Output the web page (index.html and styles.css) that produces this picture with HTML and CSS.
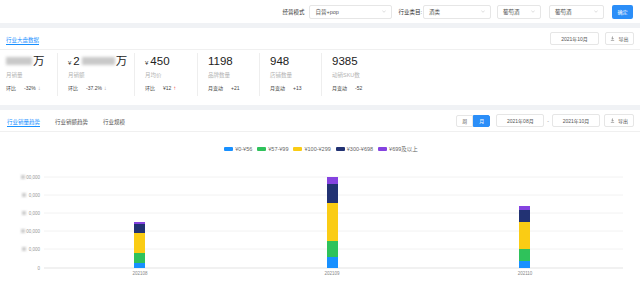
FILE: index.html
```html
<!DOCTYPE html>
<html lang="zh-CN">
<head>
    <meta charset="UTF-8">
    <meta name="viewport" content="width=device-width, initial-scale=1.0">
    <title>行业大盘数据</title>
    <link rel="stylesheet" href="styles.css">
</head>
<body>
    <!-- 筛选条 -->
    <div class="topbar">
        <span class="field-label">经营模式</span>
        <div class="select w-mode"><span>自营+pop</span><svg class="chev" viewBox="0 0 6 4"><polyline points="0.5,0.5 3,3.2 5.5,0.5"/></svg></div>
        <span class="field-label cat-label">行业类目:</span>
        <div class="select w-cat1"><span>酒类</span><svg class="chev" viewBox="0 0 6 4"><polyline points="0.5,0.5 3,3.2 5.5,0.5"/></svg></div>
        <div class="select w-cat2"><span>葡萄酒</span><svg class="chev" viewBox="0 0 6 4"><polyline points="0.5,0.5 3,3.2 5.5,0.5"/></svg></div>
        <div class="select w-cat3"><span>葡萄酒</span><svg class="chev" viewBox="0 0 6 4"><polyline points="0.5,0.5 3,3.2 5.5,0.5"/></svg></div>
        <button class="btn-primary">确定</button>
    </div>

    <!-- 行业大盘数据 -->
    <div class="card">
        <div class="card-head">
            <div class="tabs">
                <span class="tab active">行业大盘数据</span>
            </div>
            <div class="tools">
                <div class="date-box w-date">2021年10月</div>
                <button class="btn-export">
                    <svg class="dl" viewBox="0 0 6 6"><path d="M3 0.5v3.2M1.6 2.4L3 3.8 4.4 2.4M1 5.3h4"/></svg>导出
                </button>
            </div>
        </div>
        <div class="stats">
            <div class="stat">
                <div class="value"><span class="masked m-1"></span>万</div>
                <div class="label">月销量</div>
                <div class="change"><span class="kind">环比</span><span class="num">-32%</span><span class="arrow down">↓</span></div>
            </div>
            <div class="stat">
                <div class="value"><span class="yen">¥</span>2<span class="masked m-2"></span>万</div>
                <div class="label">月销额</div>
                <div class="change"><span class="kind">环比</span><span class="num">-37.2%</span><span class="arrow down">↓</span></div>
            </div>
            <div class="stat">
                <div class="value"><span class="yen">¥</span>450</div>
                <div class="label">月均价</div>
                <div class="change"><span class="kind">环比</span><span class="num">¥12</span><span class="arrow up">↑</span></div>
            </div>
            <div class="stat">
                <div class="value">1198</div>
                <div class="label">品牌数量</div>
                <div class="change"><span class="kind">月变动</span><span class="num">+21</span></div>
            </div>
            <div class="stat">
                <div class="value">948</div>
                <div class="label">店铺数量</div>
                <div class="change"><span class="kind">月变动</span><span class="num">+13</span></div>
            </div>
            <div class="stat">
                <div class="value">9385</div>
                <div class="label">动销SKU数</div>
                <div class="change"><span class="kind">月变动</span><span class="num">-52</span></div>
            </div>
        </div>
    </div>

    <!-- 趋势图 -->
    <div class="card chart-card">
        <div class="card-head head-2">
            <div class="tabs">
                <span class="tab active">行业销量趋势</span>
                <span class="tab">行业销额趋势</span>
                <span class="tab">行业规模</span>
            </div>
            <div class="tools">
                <div class="toggle">
                    <span class="opt">周</span>
                    <span class="opt on">月</span>
                </div>
                <div class="date-box w-range">2021年08月</div>
                <span class="dash">-</span>
                <div class="date-box w-range">2021年10月</div>
                <button class="btn-export">
                    <svg class="dl" viewBox="0 0 6 6"><path d="M3 0.5v3.2M1.6 2.4L3 3.8 4.4 2.4M1 5.3h4"/></svg>导出
                </button>
            </div>
        </div>

        <div class="legend">
            <span class="item"><i class="sw c1"></i>¥0-¥56</span>
            <span class="item"><i class="sw c2"></i>¥57-¥99</span>
            <span class="item"><i class="sw c3"></i>¥100-¥299</span>
            <span class="item"><i class="sw c4"></i>¥300-¥698</span>
            <span class="item"><i class="sw c5"></i>¥699及以上</span>
        </div>

        <svg class="chart" viewBox="0 0 640 124" width="640" height="124">
            <defs>
                <filter id="fuzz" x="-50%" y="-50%" width="200%" height="200%">
                    <feGaussianBlur stdDeviation="1"/>
                </filter>
            </defs>
            <g class="grid">
                <line x1="44" y1="17" x2="623" y2="17"/>
                <line x1="44" y1="35" x2="623" y2="35"/>
                <line x1="44" y1="53" x2="623" y2="53"/>
                <line x1="44" y1="71" x2="623" y2="71"/>
                <line x1="44" y1="89" x2="623" y2="89"/>
            </g>
            <line class="base" x1="44" y1="108" x2="623" y2="108"/>

            <g class="blur" filter="url(#fuzz)">
                <rect x="21" y="15" width="4" height="4"/>
                <rect x="22" y="33" width="4" height="4"/>
                <rect x="22" y="51" width="4" height="4"/>
                <rect x="21" y="69" width="4" height="4"/>
                <rect x="22" y="87" width="4" height="4"/>
            </g>
            <g class="ylab">
                <text x="40" y="19">00,000</text>
                <text x="40" y="37">0,000</text>
                <text x="40" y="55">0,000</text>
                <text x="40" y="73">00,000</text>
                <text x="40" y="91">0,000</text>
                <text x="40" y="110">0</text>
            </g>

            <!-- 202108 -->
            <rect class="c5" x="134" y="62" width="11" height="2"/>
            <rect class="c4" x="134" y="64" width="11" height="9"/>
            <rect class="c3" x="134" y="73" width="11" height="20"/>
            <rect class="c2" x="134" y="93" width="11" height="10"/>
            <rect class="c1" x="134" y="103" width="11" height="5"/>
            <!-- 202109 -->
            <rect class="c5" x="327" y="17" width="11" height="7"/>
            <rect class="c4" x="327" y="24" width="11" height="19"/>
            <rect class="c3" x="327" y="43" width="11" height="38"/>
            <rect class="c2" x="327" y="81" width="11" height="16"/>
            <rect class="c1" x="327" y="97" width="11" height="11"/>
            <!-- 202110 -->
            <rect class="c5" x="519" y="46" width="11" height="4"/>
            <rect class="c4" x="519" y="50" width="11" height="12"/>
            <rect class="c3" x="519" y="62" width="11" height="27"/>
            <rect class="c2" x="519" y="89" width="11" height="12"/>
            <rect class="c1" x="519" y="101" width="11" height="7"/>

            <g class="xlab">
                <text x="140" y="115">202108</text>
                <text x="332" y="115">202109</text>
                <text x="525" y="115">202110</text>
            </g>
        </svg>
    </div>
</body>
</html>
```

FILE: styles.css
```css
body {
    margin: 0;
    width: 640px;
    height: 284px;
    overflow: hidden;
    background-color: #f0f2f5;
    font-family: "Liberation Sans", "Noto Sans CJK SC", sans-serif;
    color: #333;
}
button {
    font-family: inherit;
    cursor: pointer;
}

/* 筛选条 */
.topbar {
    height: 23px;
    background-color: #fff;
    display: flex;
    align-items: center;
    justify-content: flex-end;
    padding-right: 7px;
}
.field-label {
    font-size: 5.5px;
    color: #333;
}
.cat-label {
    margin-left: 6px;
}
.select {
    box-sizing: border-box;
    height: 14px;
    border: 1px solid #e6e6e6;
    border-radius: 2px;
    display: flex;
    align-items: center;
    justify-content: space-between;
    padding: 0 5px 0 5px;
    font-size: 5.5px;
    color: #555;
}
.chev {
    width: 4px;
    height: 3px;
}
.chev polyline {
    fill: none;
    stroke: #c0c0c0;
    stroke-width: 0.8;
}
.w-mode { width: 83px; margin-left: 5px; }
.w-cat1 { width: 68px; margin-left: 1px; }
.w-cat2 { width: 44px; margin-left: 6px; }
.w-cat3 { width: 55px; margin-left: 8px; }
.btn-primary {
    width: 21px;
    height: 14px;
    margin-left: 8px;
    padding: 0;
    border: none;
    border-radius: 2px;
    background-color: #2b8ef8;
    color: #fff;
    font-size: 5px;
}

/* 卡片 */
.card {
    margin-top: 5px;
    background-color: #fff;
}
.card-head {
    box-sizing: border-box;
    height: 22px;
    padding: 0 6px 4px 6px;
    border-bottom: 1px solid #f0f0f0;
    display: flex;
    align-items: flex-end;
    justify-content: space-between;
}
.tabs {
    display: flex;
    gap: 15px;
}
.tab {
    box-sizing: border-box;
    height: 9px;
    font-size: 5.5px;
    line-height: 8px;
    color: #555;
    border-bottom: 1px solid transparent;
}
.tab.active {
    color: #1890ff;
    border-bottom-color: #1890ff;
}
.tools {
    display: flex;
    align-items: center;
}
.date-box {
    box-sizing: border-box;
    height: 13px;
    border: 1px solid #e6e6e6;
    border-radius: 2px;
    font-size: 5px;
    color: #555;
    display: flex;
    align-items: center;
    justify-content: center;
}
.w-date { width: 49px; }
.btn-export {
    box-sizing: border-box;
    width: 29px;
    height: 13px;
    margin-left: 6px;
    padding: 0;
    border: 1px solid #e6e6e6;
    border-radius: 2px;
    background-color: #fff;
    color: #555;
    font-size: 5px;
    display: flex;
    align-items: center;
    justify-content: center;
    gap: 3px;
}
.dl {
    width: 5px;
    height: 5px;
}
.dl path {
    fill: none;
    stroke: #777;
    stroke-width: 0.7;
}

/* 指标 */
.stats {
    display: grid;
    grid-template-columns: 57px 77px 63px 62px 62px 1fr;
    height: 43px;
    padding: 3px 0 9px 0;
}
.stat {
    padding: 1px 0 0 10px;
    border-left: 1px solid #eeeeee;
}
.stat:first-child {
    padding-left: 6px;
    border-left: none;
}
.value {
    height: 14px;
    font-size: 11.5px;
    line-height: 14px;
    color: #222;
    display: flex;
    align-items: center;
}
.yen {
    font-size: 6px;
    margin-right: 2px;
    margin-top: 3px;
}
.masked {
    display: inline-block;
    height: 8px;
    background-color: #c9c9c9;
    filter: blur(1.5px);
}
.m-1 { width: 26px; margin-right: 1px; }
.m-2 { width: 33px; margin-left: 2px; margin-right: 1px; }
.label {
    height: 8px;
    margin-top: 3px;
    font-size: 5.5px;
    line-height: 8px;
    color: #b3b3b3;
}
.change {
    height: 8px;
    margin-top: 5px;
    font-size: 5px;
    line-height: 8px;
    color: #444;
    display: flex;
}
.kind {
    margin-right: 8px;
}
.arrow {
    margin-left: 2px;
    font-size: 6px;
}
.arrow.down {
    color: #aaa;
}
.arrow.up {
    color: #f04134;
}

/* 趋势图 */
.chart-card {
    height: 174px;
}
.head-2 {
    padding-left: 7px;
}
.toggle {
    display: flex;
    height: 12px;
    margin-right: 6px;
}
.opt {
    box-sizing: border-box;
    width: 17px;
    border: 1px solid #e6e6e6;
    font-size: 5px;
    color: #555;
    display: flex;
    align-items: center;
    justify-content: center;
}
.opt:first-child {
    border-radius: 2px 0 0 2px;
}
.opt.on {
    background-color: #2b8ef8;
    border-color: #2b8ef8;
    color: #fff;
    border-radius: 0 2px 2px 0;
}
.w-range { width: 48px; }
.dash {
    font-size: 5px;
    color: #888;
    margin: 0 3px;
}
.head-2 .btn-export {
    width: 30px;
    margin-left: 4px;
}
.legend {
    display: flex;
    justify-content: center;
    gap: 5px;
    height: 8px;
    padding: 13px 0 7px 2px;
    font-size: 5.5px;
    line-height: 8px;
    color: #666;
}
.legend .item {
    height: 8px;
    display: flex;
    align-items: center;
}
.sw {
    width: 9px;
    height: 4px;
    border-radius: 1px;
    margin-right: 2px;
}
.sw.c1, .chart .c1 { background-color: #1890ff; fill: #1890ff; }
.sw.c2, .chart .c2 { background-color: #2fc25b; fill: #2fc25b; }
.sw.c3, .chart .c3 { background-color: #facc14; fill: #facc14; }
.sw.c4, .chart .c4 { background-color: #223273; fill: #223273; }
.sw.c5, .chart .c5 { background-color: #8543e0; fill: #8543e0; }
.chart {
    display: block;
}
.grid line {
    stroke: #f2f2f2;
    stroke-width: 1;
}
.base {
    stroke: #e3e3e3;
    stroke-width: 1;
}
.blur rect {
    fill: #cccccc;
}
.ylab text {
    font-size: 4.5px;
    fill: #999;
    text-anchor: end;
}
.xlab text {
    font-size: 4.5px;
    fill: #888;
    text-anchor: middle;
}
```
